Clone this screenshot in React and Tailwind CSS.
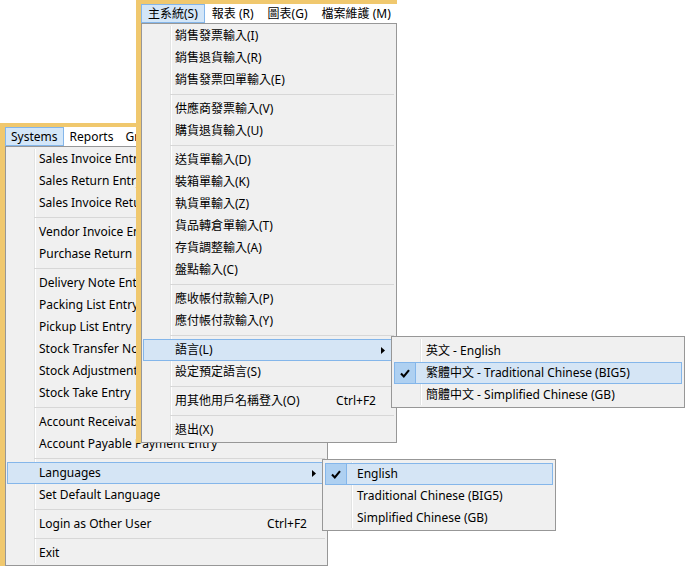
import React from "react";

const Y = "bg-[#f0c86e]";

function Arrow() {
  return (
    <svg className="absolute right-[8px] top-[7px]" width="4" height="7" viewBox="0 0 4 7">
      <polygon points="0,0 4,3.5 0,7" fill="#000" />
    </svg>
  );
}

function Check() {
  return (
    <div className="absolute left-[-1px] top-[-1px] flex h-[22px] w-[22px] items-center justify-center border border-[#84b6ea] bg-[#aed0f1]">
      <svg width="10" height="9" viewBox="0 0 10 9">
        <path d="M1 4.6 L3.8 7.4 L9 1.2" fill="none" stroke="#000" strokeWidth="2.1" />
      </svg>
    </div>
  );
}

function Row({ item, sub }) {
  const hi = item.hi;
  return (
    <div
      className={
        "relative z-10 flex h-[22px] items-center border pl-[31px] pr-[17px] " +
        (sub ? "ml-[2px] mr-[2px] " : "ml-[1px] mr-[2px] ") +
        (hi ? "border-[#84b6ea] bg-[#d5e5f5]" : "border-transparent")
      }
    >
      {item.check && <Check />}
      <span className="flex-1 whitespace-nowrap">{item.label}</span>
      {item.shortcut && <span className="whitespace-nowrap">{item.shortcut}</span>}
      {item.arrow && <Arrow />}
    </div>
  );
}

function Sep() {
  return (
    <div className="relative z-10 flex h-[7px] items-center ml-[28px] mr-[2px]">
      <div className="h-px w-full bg-[#d7d7d7]" />
    </div>
  );
}

function Menu({ items, sub, className }) {
  return (
    <div className={"relative border border-[#979797] bg-[#f0f0f0] " + (sub ? "pt-[3px] pb-[1px] " : "py-px ") + className}>
      <div className="absolute bottom-[2px] left-[28px] top-[2px] w-px bg-[#e2e3e3]" />
      <div className="absolute bottom-[2px] left-[29px] top-[2px] w-px bg-white" />
      {items.map((it, i) => (it === "-" ? <Sep key={i} /> : <Row key={i} item={it} sub={sub} />))}
    </div>
  );
}

function MenuBar({ items, wide }) {
  return (
    <div className="flex h-[19px] items-stretch bg-white">
      {items.map((t, i) => (
        <div
          key={i}
          className={
            "flex items-center whitespace-nowrap border " +
            (wide ? "px-[6px] " : "px-[5px] ") +
            (i === 0 ? "border-[#84b6ea] bg-[#d3e6f8]" : "border-transparent")
          }
        >
          {t}
        </div>
      ))}
    </div>
  );
}

const enItems = [
  { label: "Sales Invoice Entry" },
  { label: "Sales Return Entry" },
  { label: "Sales Invoice Return Entry" },
  "-",
  { label: "Vendor Invoice Entry" },
  { label: "Purchase Return Entry" },
  "-",
  { label: "Delivery Note Entry" },
  { label: "Packing List Entry" },
  { label: "Pickup List Entry" },
  { label: "Stock Transfer Note Entry" },
  { label: "Stock Adjustment Entry" },
  { label: "Stock Take Entry" },
  "-",
  { label: "Account Receivable Payment Entry" },
  { label: "Account Payable Payment Entry" },
  "-",
  { label: "Languages", arrow: true, hi: true },
  { label: "Set Default Language" },
  "-",
  { label: "Login as Other User", shortcut: "Ctrl+F2" },
  "-",
  { label: "Exit" },
];

const zhItems = [
  { label: "銷售發票輸入(I)" },
  { label: "銷售退貨輸入(R)" },
  { label: "銷售發票回單輸入(E)" },
  "-",
  { label: "供應商發票輸入(V)" },
  { label: "購貨退貨輸入(U)" },
  "-",
  { label: "送貨單輸入(D)" },
  { label: "裝箱單輸入(K)" },
  { label: "執貨單輸入(Z)" },
  { label: "貨品轉倉單輸入(T)" },
  { label: "存貨調整輸入(A)" },
  { label: "盤點輸入(C)" },
  "-",
  { label: "應收帳付款輸入(P)" },
  { label: "應付帳付款輸入(Y)" },
  "-",
  { label: "語言(L)", arrow: true, hi: true },
  { label: "設定預定語言(S)" },
  "-",
  { label: "用其他用戶名稱登入(O)", shortcut: "Ctrl+F2" },
  "-",
  { label: "退出(X)" },
];

export default function App() {
  return (
    <div className="relative h-[573px] w-[685px] overflow-hidden bg-white font-['Noto_Sans','Noto_Sans_CJK_TC',sans-serif] text-[12px] leading-none text-black">
      {/* English window */}
      <div className="absolute left-0 top-[123px] z-0 flex w-[328px] flex-col">
        <div className={"h-[4px] " + Y} />
        <div className="flex">
          <div className={"w-[5px] " + Y} />
          <div className="flex w-[323px] flex-col">
            <MenuBar items={["Systems", "Reports", "Graphs", "File Maintenance"]} />
            <Menu items={enItems} className="w-[323px]" />
          </div>
        </div>
      </div>

      {/* English submenu */}
      <div className="absolute left-[322px] top-[459px] z-10">
        <Menu
          sub
          className="w-[234px]"
          items={[
            { label: "English", hi: true, check: true },
            { label: "Traditional Chinese (BIG5)" },
            { label: "Simplified Chinese (GB)" },
          ]}
        />
      </div>

      {/* Chinese window */}
      <div className="absolute left-[136px] top-0 z-20 flex w-[261px] flex-col">
        <div className={"h-[4px] " + Y} />
        <div className="flex">
          <div className={"w-[5px] " + Y} />
          <div className="flex w-[256px] flex-col">
            <MenuBar wide items={["主系統(S)", "報表 (R)", "圖表(G)", "檔案維護 (M)"]} />
            <Menu items={zhItems} className="w-[256px]" />
          </div>
        </div>
      </div>

      {/* Chinese submenu */}
      <div className="absolute left-[391px] top-[336px] z-30">
        <Menu
          sub
          className="w-[294px]"
          items={[
            { label: "英文 - English" },
            { label: "繁體中文 - Traditional Chinese (BIG5)", hi: true, check: true },
            { label: "簡體中文 - Simplified Chinese (GB)" },
          ]}
        />
      </div>
    </div>
  );
}
